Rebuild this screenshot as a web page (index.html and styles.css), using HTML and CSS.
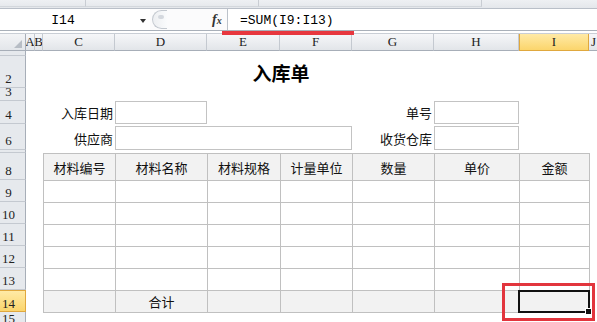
FILE: index.html
```html
<!DOCTYPE html>
<html lang="zh-CN">
<head>
<meta charset="utf-8">
<title>入库单</title>
<link rel="stylesheet" href="styles.css">
</head>
<body>
<div class="app">
  <div class="ribbon">
    <span class="rb-group rb-g1"></span>
    <span class="rb-group rb-g2"></span>
    <span class="rb-group rb-g3"></span>
  </div>
  <div class="fbar">
    <div class="namebox">
      <span class="namebox-text">I14</span>
      <span class="namebox-arrow"></span>
    </div>
    <div class="fbar-mid">
      <span class="grip"><span class="grip-dot"></span></span>
      <span class="fx">f<span class="fx-x">x</span></span>
    </div>
    <div class="formula">=SUM(I9:I13)</div>
  </div>

  <div class="sheet">
    <div class="corner">
      <svg width="26" height="18" viewBox="0 0 26 18"><polygon points="22,6 22,14 14,14" fill="#b7bdc5"/></svg>
    </div>
    <div class="ch">A</div>
    <div class="ch">B</div>
    <div class="ch">C</div>
    <div class="ch">D</div>
    <div class="ch">E</div>
    <div class="ch">F</div>
    <div class="ch">G</div>
    <div class="ch">H</div>
    <div class="ch ch-sel">I</div>
    <div class="ch ch-last">J</div>

    <div class="rh">1</div>
    <div class="rh">2</div>
    <div class="rh">3</div>
    <div class="rh">4</div>
    <div class="rh">5</div>
    <div class="rh">6</div>
    <div class="rh">7</div>
    <div class="rh">8</div>
    <div class="rh">9</div>
    <div class="rh">10</div>
    <div class="rh">11</div>
    <div class="rh">12</div>
    <div class="rh">13</div>
    <div class="rh rh-sel">14</div>
    <div class="rh rh-last">15</div>

    <div class="title">入库单</div>

    <div class="label row4 colC">入库日期</div>
    <div class="inbox row4 colD"></div>
    <div class="label row4 colG">单号</div>
    <div class="inbox row4 colH"></div>

    <div class="label row6 colC">供应商</div>
    <div class="inbox row6 colDF"></div>
    <div class="label row6 colG">收货仓库</div>
    <div class="inbox row6 colH"></div>

    <div class="table">
      <div class="tc th">材料编号</div>
      <div class="tc th">材料名称</div>
      <div class="tc th">材料规格</div>
      <div class="tc th">计量单位</div>
      <div class="tc th">数量</div>
      <div class="tc th">单价</div>
      <div class="tc th end">金额</div>

      <div class="tc"></div><div class="tc"></div><div class="tc"></div><div class="tc"></div><div class="tc"></div><div class="tc"></div><div class="tc end"></div>
      <div class="tc"></div><div class="tc"></div><div class="tc"></div><div class="tc"></div><div class="tc"></div><div class="tc"></div><div class="tc end"></div>
      <div class="tc"></div><div class="tc"></div><div class="tc"></div><div class="tc"></div><div class="tc"></div><div class="tc"></div><div class="tc end"></div>
      <div class="tc"></div><div class="tc"></div><div class="tc"></div><div class="tc"></div><div class="tc"></div><div class="tc"></div><div class="tc end"></div>
      <div class="tc"></div><div class="tc"></div><div class="tc"></div><div class="tc"></div><div class="tc"></div><div class="tc"></div><div class="tc end"></div>

      <div class="tc tf"></div>
      <div class="tc tf">合计</div>
      <div class="tc tf"></div>
      <div class="tc tf"></div>
      <div class="tc tf"></div>
      <div class="tc tf"></div>
      <div class="tc tf end"></div>
    </div>

    <div class="selection"><span class="fill-handle"></span></div>
  </div>

  <div class="mark-underline"></div>
  <div class="mark-box"></div>
</div>
</body>
</html>
```

FILE: styles.css
```css
html, body {
  margin: 0;
  padding: 0;
  background: #ffffff;
}

.app {
  position: relative;
  width: 597px;
  height: 322px;
  overflow: hidden;
  font-family: "Noto Sans CJK SC", "Noto Sans", sans-serif;
  color: #111;
}

/* ribbon remnant */
.ribbon {
  position: relative;
  height: 8px;
  background: linear-gradient(#eef0f3, #e4e7eb);
  border-bottom: 1px solid #b9bfc8;
  display: flex;
}
.rb-group {
  display: block;
  height: 6px;
  border-right: 1px solid #c9cdd3;
  border-bottom: 1px solid #d3d7dc;
}
.rb-g1 { width: 85px; }
.rb-g2 { width: 172px; }
.rb-g3 { width: 222px; }

/* formula bar */
.fbar {
  display: flex;
  height: 21px;
  background: #ffffff;
  border-bottom: 1px solid #a9b0b9;
}
.namebox {
  width: 150px;
  display: flex;
  align-items: center;
  padding-top: 2px;
  box-sizing: border-box;
}
.namebox-text {
  width: 126px;
  text-align: center;
  font-family: "Liberation Mono", monospace;
  font-size: 13px;
  color: #000;
}
.namebox-arrow {
  margin-left: 14px;
  width: 0;
  height: 0;
  border-left: 3.5px solid transparent;
  border-right: 3.5px solid transparent;
  border-top: 4px solid #333;
}
.fbar-mid {
  width: 78px;
  display: flex;
  align-items: center;
  border-right: 1px solid #bcc2ca;
  box-sizing: border-box;
  background: #fbfbfc;
}
.grip {
  margin-left: 2px;
  width: 15px;
  height: 19px;
  border: 1px solid #c3c8cf;
  border-right: none;
  border-radius: 10px 0 0 10px;
  background: linear-gradient(90deg, #eceef1, #fafbfc);
  box-sizing: border-box;
  display: flex;
  align-items: center;
  justify-content: flex-start;
}
.grip-dot {
  margin-left: 5px;
  width: 6px;
  height: 4px;
  border-radius: 3px;
  background: #d4d8de;
  margin-top: -6px;
}
.fx {
  margin-left: 45px;
  font-family: "Liberation Serif", serif;
  font-style: italic;
  font-weight: bold;
  font-size: 14px;
  color: #333;
  padding-top: 1px;
}
.fx-x {
  font-size: 10px;
}
.formula {
  flex: 1;
  padding-left: 12px;
  padding-top: 3px;
  font-family: "Liberation Mono", monospace;
  font-size: 13px;
  color: #000;
  line-height: 17px;
}

/* sheet grid */
.sheet {
  margin-top: 2px;
  border-top: 1px solid #c9ced5;
  display: grid;
  grid-template-columns: 26px 9px 8px 72px 92px 73px 72px 82px 85px 70px 1fr;
  grid-template-rows: 17px 5px 32px 13px 23px 2px 24px 3px 27px 22px 22px 22px 22px 22px 22px 1fr;
  height: 289px;
  background: #ffffff;
}

.corner {
  grid-column: 1;
  grid-row: 1;
  background: linear-gradient(#f3f4f6, #e3e6ea);
  border-right: 1px solid #a7aeb8;
  border-bottom: 1px solid #a7aeb8;
  box-sizing: border-box;
  overflow: hidden;
}
.corner svg { display: block; }

.ch {
  background: linear-gradient(#f6f7f9, #e2e5e9);
  border-right: 1px solid #c4c9d0;
  border-bottom: 1px solid #a7aeb8;
  box-sizing: border-box;
  font-family: "Liberation Serif", serif;
  font-size: 13px;
  color: #222;
  display: flex;
  align-items: center;
  justify-content: center;
  overflow: hidden;
}
.ch-sel {
  background: linear-gradient(#ffeaa6, #fbd56c);
  border: 1px solid #e0a83e;
  border-top: none;
}
.ch-last {
  justify-content: flex-start;
  padding-left: 2px;
  border-right: none;
}

.rh {
  grid-column: 1;
  background: #e6e9ed;
  border-right: 1px solid #a7aeb8;
  border-bottom: 1px solid #c4c9d0;
  box-sizing: border-box;
  font-family: "Liberation Serif", serif;
  font-size: 13px;
  line-height: 13px;
  color: #222;
  display: flex;
  align-items: flex-end;
  justify-content: center;
  padding-right: 8px;
  padding-bottom: 2px;
  overflow: hidden;
}
.rh-sel {
  background: linear-gradient(#ffeaa6, #fbd56c);
  border: 1px solid #e0a83e;
  border-left: none;
  padding-bottom: 1px;
}
.rh-last {
  align-items: flex-start;
  padding-bottom: 0;
  border-bottom: none;
}

/* placements */
.row4 { grid-row: 5; }
.row6 { grid-row: 7; }
.colC { grid-column: 4; }
.colD { grid-column: 5; }
.colDF { grid-column: 5 / 8; }
.colG { grid-column: 8; }
.colH { grid-column: 9; }

.title {
  grid-column: 4 / 10;
  grid-row: 3;
  display: flex;
  align-items: center;
  justify-content: center;
  font-size: 19px;
  font-weight: bold;
  color: #000;
}

.label {
  display: flex;
  align-items: center;
  justify-content: flex-end;
  padding-right: 2px;
  font-size: 13px;
  color: #111;
  white-space: nowrap;
}

.inbox {
  border: 1px solid #c3c3c3;
  box-sizing: border-box;
  background: #fff;
}

.table {
  grid-column: 4 / 11;
  grid-row: 9 / 16;
  margin-right: -1px;
  margin-bottom: -1px;
  display: grid;
  grid-template-columns: 72px 92px 73px 72px 82px 85px 71px;
  grid-template-rows: 27px 22px 22px 22px 22px 22px 23px;
}
.tc {
  border-left: 1px solid #c0c0c0;
  border-top: 1px solid #c0c0c0;
  box-sizing: border-box;
  display: flex;
  align-items: center;
  justify-content: center;
  font-size: 13px;
  color: #111;
  background: #fff;
}
.tc.end { border-right: 1px solid #c0c0c0; }
.th { background: #f2f2f2; }
.tf { background: #f2f2f2; border-bottom: 1px solid #c0c0c0; }

.selection {
  grid-column: 10;
  grid-row: 15;
  position: relative;
  margin: 0 -1px -1px -1px;
  border: 2px solid #111;
  box-sizing: border-box;
  z-index: 2;
}
.fill-handle {
  position: absolute;
  right: -4px;
  bottom: -4px;
  width: 5px;
  height: 5px;
  background: #111;
  border: 1px solid #fff;
}

/* annotations */
.mark-underline {
  position: absolute;
  left: 222px;
  top: 31px;
  width: 132px;
  height: 4px;
  background: #e7373e;
  z-index: 5;
}
.mark-box {
  position: absolute;
  left: 502px;
  top: 283px;
  width: 93px;
  height: 38px;
  border: 3px solid #e2353d;
  box-sizing: border-box;
  z-index: 5;
}
```
